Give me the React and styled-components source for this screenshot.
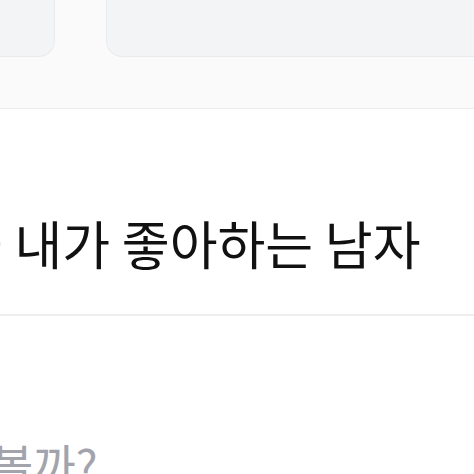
import styled, { createGlobalStyle } from "styled-components";

const GlobalStyle = createGlobalStyle`
  html, body {
    margin: 0;
    padding: 0;
    background: #ffffff;
    overflow: hidden;
  }
  body {
    font-family: "Noto Sans CJK KR", "Noto Sans", sans-serif;
  }
`;

export default function App() {
  const cards = [{ width: 200, offset: -145 }, { width: 420 }];
  return (
    <Page>
      <GlobalStyle />
      <TopBand>
        <CardRow>
          {cards.map((card, i) => (
            <OptionCard key={i} $width={card.width} $offset={card.offset} />
          ))}
        </CardRow>
      </TopBand>
      <TitleSection>
        <Title>을 내가 좋아하는 남자</Title>
      </TitleSection>
      <QuestionSection>
        <Question>볼까?</Question>
      </QuestionSection>
    </Page>
  );
}

const Page = styled.div`
  width: 474px;
  height: 474px;
  overflow: hidden;
  display: flex;
  flex-direction: column;
`;

const TopBand = styled.div`
  height: 108px;
  background: #fafafa;
  border-bottom: 1px solid #ececec;
  flex-shrink: 0;
`;

const CardRow = styled.div`
  display: flex;
  gap: 51px;
  height: 57px;
`;

const OptionCard = styled.div`
  flex-shrink: 0;
  width: ${(p) => p.$width}px;
  margin-left: ${(p) => p.$offset || 0}px;
  height: 100%;
  box-sizing: border-box;
  background: #f2f4f6;
  border: 1px solid #e9ebee;
  border-top: none;
  border-radius: 0 0 16px 16px;
`;

const TitleSection = styled.div`
  height: 207px;
  box-sizing: border-box;
  padding-top: 97px;
  background: #ffffff;
  border-bottom: 2px solid #efefef;
  flex-shrink: 0;
  overflow: hidden;
`;

const Title = styled.div`
  font-size: 52px;
  line-height: 74px;
  color: #111111;
  white-space: nowrap;
  margin-left: -45px;
`;

const QuestionSection = styled.div`
  padding-top: 116px;
  flex-shrink: 0;
`;

const Question = styled.div`
  font-size: 46px;
  line-height: 62px;
  color: #a3a3ab;
  white-space: nowrap;
  margin-left: -9px;
`;
